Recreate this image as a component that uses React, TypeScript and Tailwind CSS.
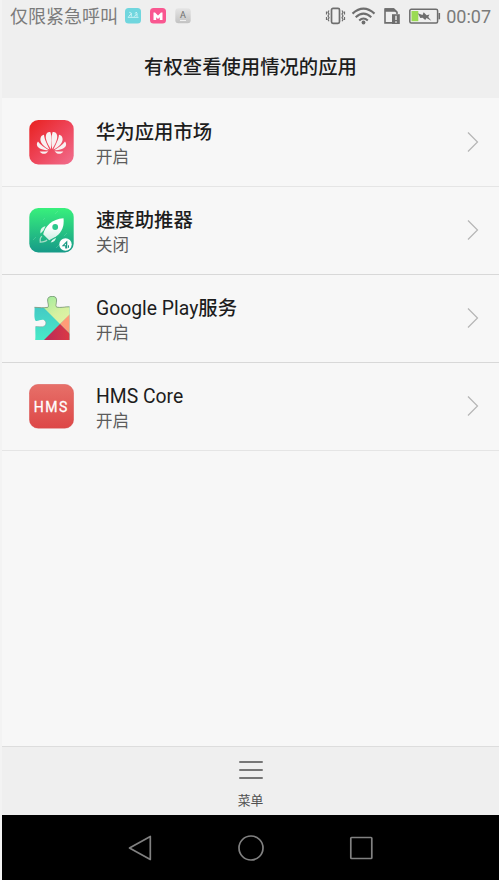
import React from 'react';

function HuaweiIcon() {
  return (
    <svg viewBox="0 0 45 45" className="size-[45px]">
      <defs>
        <linearGradient id="hw" x1="0" y1="0" x2="1" y2="1">
          <stop offset="0" stopColor="#e8211f" />
          <stop offset="0.5" stopColor="#ee4458" />
          <stop offset="1" stopColor="#f16f8f" />
        </linearGradient>
      </defs>
      <rect x="0.3" y="0" width="44.4" height="44.4" rx="9" fill="url(#hw)" />
      <g fill="#f8f1f1">
        <path d="M21.8 29.2C18 23 14.800 16.500 18.200 12.800C19.500 11.800 20.900 11.900 21.600 12.400C23 17 22.600 24 21.800 29.200Z" />
        <path d="M20.600 29.600C15 27 9.800 22 11.800 17.200C12.500 15.600 13.800 14.900 15 14.800C15.500 20 18.700 25.500 20.600 29.600Z" />
        <path d="M19.800 30.300C14.500 30.200 8.400 28.900 7.900 24.800C7.800 23.400 8.200 22.400 9 21.600C11.500 25 15.700 28 19.800 30.300Z" />
        <path d="M19.300 31.200C17.200 34.200 13.200 34.900 10.600 31.500C13.500 31.600 16.500 31.500 19.300 31.200Z" />
        <path d="M23.200 29.200C27 23 30.200 16.500 26.800 12.800C25.500 11.800 24.100 11.900 23.400 12.400C22 17 22.400 24 23.200 29.200Z" />
        <path d="M24.400 29.600C30 27 35.200 22 33.200 17.200C32.500 15.600 31.200 14.900 30 14.800C29.500 20 26.300 25.500 24.400 29.600Z" />
        <path d="M25.200 30.300C30.500 30.200 36.600 28.900 37.100 24.800C37.200 23.400 36.800 22.400 36 21.600C33.500 25 29.300 28 25.200 30.300Z" />
        <path d="M25.700 31.200C27.800 34.200 31.800 34.900 34.400 31.500C31.500 31.600 28.500 31.500 25.700 31.200Z" />
      </g>
    </svg>
  );
}

function RocketIcon() {
  return (
    <svg viewBox="0 0 45 45" className="size-[45px]">
      <defs>
        <linearGradient id="rk" x1="0" y1="0" x2="0" y2="1">
          <stop offset="0" stopColor="#38f07c" />
          <stop offset="1" stopColor="#169a88" />
        </linearGradient>
        <linearGradient id="rkb" x1="0" y1="0" x2="0" y2="1">
          <stop offset="0.4" stopColor="#ffffff" />
          <stop offset="1" stopColor="#cdeee2" />
        </linearGradient>
      </defs>
      <rect x="0.3" y="0" width="44.4" height="44.4" rx="9" fill="url(#rk)" />
      <g stroke="#78edae" strokeWidth="0.6" opacity="0.6">
        <path d="M14 12l2-2M26 6l3-3M4 32l3-3M35 28l3-3M27 40l3-3" />
      </g>
      <path d="M34.500 10.300C35.300 17.500 33.500 24 27 28.500L20.200 32.300L14.200 26.200C16 18.500 23 11 34.500 10.300Z" fill="url(#rkb)" />
      <path d="M16.500 18.200C13 18.700 10.800 21.500 11.500 25.500L14.500 22.500ZM27 29.800C26.500 32.500 25 34 21.600 34.500L23.300 32Z" fill="#dcf6eb" />
      <path d="M13 28.300C10.800 29.500 10.900 31.500 11.300 34.200C14.500 34 17 33.500 18 31.900" fill="none" stroke="#a5dcc7" strokeWidth="1.300" />
      <circle cx="26.200" cy="19" r="2.900" fill="#2bc98d" />
      <circle cx="36.500" cy="36.500" r="6.200" fill="#fff" />
      <path d="M38.300 32.400V40.500H36.200V38.300H32.700Z" fill="#199b84" />
      <path d="M39.500 37.300v2.500" stroke="#199b84" strokeWidth="1" />
      <path d="M37 35.600v1.700h-1.800Z" fill="#fff" />
    </svg>
  );
}

function PlayServicesIcon() {
  return (
    <svg viewBox="0 0 45 45" className="size-[45px]">
      <defs>
        <clipPath id="piece">
          <path d="M5.500 11.300C10 11.400 15 12.200 18.800 11.300C20.700 10 17 4 19.600 1.500C21.400-.1 25-.1 26.800 1.500C29 4 25.700 9.800 27.500 11.100C31 12 36.500 10.700 40.500 10.800V44H6.200C6.700 39.500 6.100 35 6.400 30.700C8.500 29.800 13.500 32 15.800 29.700C17.500 28 17.200 25.400 15.300 24.300C12.500 22.600 9 25.700 6.500 24.700C4.500 21 5.900 15.500 5.500 11.300Z" />
        </clipPath>
        <linearGradient id="teal" x1="0" y1="0" x2="0" y2="1">
          <stop offset="0" stopColor="#42bfc4" />
          <stop offset="1" stopColor="#48ebc7" />
        </linearGradient>
        <linearGradient id="lime" x1="0" y1="0" x2="1" y2="1">
          <stop offset="0" stopColor="#8ee99d" />
          <stop offset="0.6" stopColor="#d5f1a0" />
          <stop offset="1" stopColor="#e5f4a8" />
        </linearGradient>
        <linearGradient id="red" x1="0" y1="0" x2="1" y2="0">
          <stop offset="0" stopColor="#b72a5b" />
          <stop offset="1" stopColor="#e13b40" />
        </linearGradient>
      </defs>
      <g clipPath="url(#piece)">
        <path d="M0 0H45V45H0Z" fill="url(#teal)" />
        <path d="M3 0H45V15L31 28Z" fill="url(#lime)" />
        <path d="M31 28L45 14V42Z" fill="#ff9c77" />
        <path d="M14 45L31 28L45 42V45Z" fill="url(#red)" />
      </g>
      <path d="M5.500 11.300C10 11.400 15 12.200 18.800 11.300C20.700 10 17 4 19.600 1.500C21.400-.1 25-.1 26.800 1.500C29 4 25.700 9.800 27.500 11.100C31 12 36.500 10.700 40.500 10.800" fill="none" stroke="#7a8a68" strokeWidth="0.700" />
      <path d="M6.400 30.700C8.500 29.800 13.500 32 15.800 29.700C17.500 28 17.200 25.400 15.300 24.300" fill="none" stroke="#7a9793" strokeWidth="0.500" />
    </svg>
  );
}

function HmsIcon() {
  return (
    <svg viewBox="0 0 45 45" className="size-[45px]">
      <defs>
        <linearGradient id="hms" x1="0" y1="0" x2="0" y2="1">
          <stop offset="0" stopColor="#e77069" />
          <stop offset="1" stopColor="#dd4747" />
        </linearGradient>
      </defs>
      <rect x="0.300" y="0.300" width="44.400" height="44" rx="9" fill="url(#hms)" stroke="#d75555" strokeWidth="0.400" />
      <text x="4.700 16.200 29.900" y="27.900" fill="#fff" stroke="#fff" strokeWidth="0.300" fontSize="14" className="font-['Roboto'] font-normal">HMS</text>
    </svg>
  );
}

const apps = [
  { latin: '', name: '华为应用市场', state: '开启', Icon: HuaweiIcon, line: 'border-[#e5e5e5]' },
  { latin: '', name: '速度助推器', state: '关闭', Icon: RocketIcon, line: 'border-[#d8d8d8]' },
  { latin: 'Google Play', name: '服务', state: '开启', Icon: PlayServicesIcon, line: 'border-[#d8d8d8]' },
  { latin: 'HMS Core', name: '', state: '开启', Icon: HmsIcon, line: 'border-[#e5e5e5]' },
];

function StatusBar() {
  return (
    <div className="flex h-8 items-center pl-2 pr-2 text-[#7b7b7b]">
      <span className="w-[108px] whitespace-nowrap pt-0.5 text-[18px] leading-8">仅限紧急呼叫</span>
      <svg viewBox="0 0 66 16" className="ml-[7px] h-4 w-[66px]">
        <defs>
          <linearGradient id="key" x1="0" y1="0" x2="0" y2="1">
            <stop offset="0" stopColor="#e5e5e5" />
            <stop offset="1" stopColor="#c2c2c2" />
          </linearGradient>
        </defs>
        <rect width="16" height="15.500" rx="3.500" fill="#70d6de" />
        <path d="M2.800 9.300H13.500M3.600 8.600L6.300 5.500V8.600M9.300 8.600L12 5.500V8.600M4.300 4.300l2.200 1M12 4.300l-2.200 1" fill="none" stroke="#e2fafb" strokeWidth="0.800" />
        <rect x="25" width="16" height="15.500" rx="3.500" fill="#f95790" />
        <path d="M28.500 12V4.500H30L33 7.600L36 4.500H37.500V12H34.800V9.300L33 11L31.200 9.300V12Z" fill="#fff" />
        <rect x="50.300" y="0.300" width="15.400" height="15" rx="3" fill="url(#key)" />
        <text x="58" y="10.200" textAnchor="middle" fontSize="9" fill="#6d6d6d">A</text>
        <path d="M55 12.500h6" stroke="#f4f4f4" strokeWidth="0.900" />
      </svg>
      <svg viewBox="0 0 116 20" className="ml-auto h-5 w-[116px]" fill="none" stroke="#6e6e6e">
        <rect x="6.500" y="2.300" width="8" height="15" rx="1.500" strokeWidth="1.700" />
        <path d="M4 4.500l-1 1.800L4 8.100L3 9.900L4 11.700L3 13.500L4 15.300M17 4.500l1 1.800L17 8.100l1 1.800L17 11.700l1 1.800L17 15.300M1.500 5.500v3M1.500 11v3M19.500 5.500v3M19.500 11v3" strokeWidth="1.200" />
        <g strokeWidth="2.100">
          <path d="M27.500 7.600Q38.500-2.200 49.500 7.600" />
          <path d="M30.700 11.200Q38.500 4.100 46.300 11.200" />
          <path d="M34.200 14.500Q38.500 10.500 42.800 14.500" />
        </g>
        <circle cx="38.500" cy="16.500" r="1.900" fill="#6e6e6e" stroke="none" />
        <path d="M67 16.900h-7V3h8.500l3.500 3.300V8" strokeWidth="1.600" />
        <path d="M60 2.200h9l3.700 3.600H60Z" fill="#6e6e6e" stroke="none" />
        <path d="M67 8.200H74.800V18H67Z" fill="#6e6e6e" stroke="none" />
        <path d="M71 9.800v4.300M71 15.200v1.500" stroke="#efefef" strokeWidth="1.400" />
        <rect x="84.800" y="3.300" width="27.800" height="13.600" rx="1.500" strokeWidth="1.500" />
        <path d="M86.500 5h6.800v10.200h-6.800Z" fill="#9bdb54" stroke="none" />
        <path d="M92.800 7.200L97.500 9L98.700 6.200L101.600 9.300L104.500 8.600L103.300 11L106.300 14.800L101.500 12.100L100.200 14L97.600 11.700L95.300 12Z" fill="#6e6e6e" stroke="none" />
        <path d="M114.300 7v6.300" strokeWidth="1.600" />
      </svg>
      <span className="ml-[5px] whitespace-nowrap pt-px text-[18px] leading-8">00:07</span>
    </div>
  );
}

export default function App() {
  return (
    <div className="h-[880px] w-[499px] bg-[#f3f3f3] pl-0.5 font-['Roboto','Noto_Sans_CJK_SC',sans-serif]">
      <div className="flex h-full flex-col bg-[#f7f7f7]">
        <header className="h-[98px] bg-[#efefef]">
          <StatusBar />
          <h1 className="pt-[21px] text-center text-[19.350px] font-medium leading-[30px] text-[#1d1d1d]">有权查看使用情况的应用</h1>
        </header>
        <main className="flex-1 pt-px">
          {apps.map(({ latin, name, state, Icon, line }) => (
            <div key={latin + name} className={`flex h-[88px] items-center border-b pb-px pl-[27px] pr-5 ${line}`}>
              <Icon />
              <div className="ml-[22px] flex-1 whitespace-nowrap pt-[5px]">
                <div className="text-[19.350px] font-medium leading-[26px] text-[#1d1d1d]">
                  {latin && <span className="font-normal">{latin}</span>}
                  {name}
                </div>
                <div className="text-[16.500px] leading-6 text-[#5c5c5c]">{state}</div>
              </div>
              <svg viewBox="0 0 12 22" className="h-[22px] w-3" fill="none" stroke="#b5b5b5" strokeWidth="1.200">
                <path d="M1 1.500L10.500 11L1 20.500" />
              </svg>
            </div>
          ))}
        </main>
        <footer className="flex h-[69px] flex-col items-center border-t border-[#dddddd] bg-[#efefef] pt-[13px]">
          <svg viewBox="0 0 24 20" className="h-5 w-6" stroke="#777777" strokeWidth="2" strokeLinecap="round">
            <path d="M1 2h22M1 10h22M1 18h22" />
          </svg>
          <span className="mt-[11px] text-[12.800px] leading-5 text-[#505050]">菜单</span>
        </footer>
        <nav className="flex h-[65px] items-center justify-center gap-[84px] bg-black">
          <svg viewBox="0 0 26 28" className="h-7 w-[26px]" fill="none" stroke="#818181" strokeWidth="1.700" strokeLinejoin="round">
            <path d="M2.500 14L23.300 2.500V25.500Z" />
          </svg>
          <svg viewBox="0 0 28 28" className="size-7" fill="none" stroke="#818181" strokeWidth="1.700">
            <circle cx="14" cy="14" r="12" />
          </svg>
          <svg viewBox="0 0 26 26" className="size-[26px]" fill="none" stroke="#818181" strokeWidth="1.700">
            <rect x="1.800" y="2.500" width="21" height="21" rx="0.800" />
          </svg>
        </nav>
      </div>
    </div>
  );
}
